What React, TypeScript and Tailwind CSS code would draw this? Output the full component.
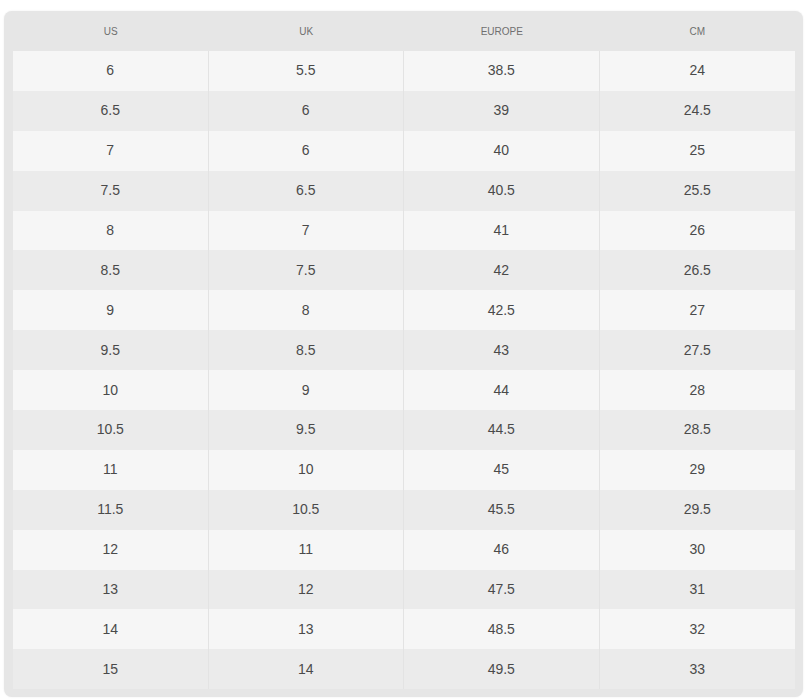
const headers = ["US", "UK", "Europe", "CM"]

const rows = [
  ["6", "5.5", "38.5", "24"],
  ["6.5", "6", "39", "24.5"],
  ["7", "6", "40", "25"],
  ["7.5", "6.5", "40.5", "25.5"],
  ["8", "7", "41", "26"],
  ["8.5", "7.5", "42", "26.5"],
  ["9", "8", "42.5", "27"],
  ["9.5", "8.5", "43", "27.5"],
  ["10", "9", "44", "28"],
  ["10.5", "9.5", "44.5", "28.5"],
  ["11", "10", "45", "29"],
  ["11.5", "10.5", "45.5", "29.5"],
  ["12", "11", "46", "30"],
  ["13", "12", "47.5", "31"],
  ["14", "13", "48.5", "32"],
  ["15", "14", "49.5", "33"],
]

export default function App() {
  return (
    <div className="h-[700px] w-[806px] bg-white pl-[4px] pt-[11px] font-['Liberation_Sans',Arial,sans-serif]">
      <div className="w-[799px] rounded-[8px] bg-[#e6e6e6] pb-[8px] pl-[9px] pr-[8px] shadow-[0_0_2px_rgba(0,0,0,0.08)]">
        <div className="grid h-[40px] grid-cols-4 items-center">
          {headers.map((h) => (
            <div key={h} className="text-center text-[10px] uppercase text-[#6f6f6f]">
              {h}
            </div>
          ))}
        </div>
        <div>
          {rows.map((row, i) => (
            <div
              key={i}
              className={
                i % 2 === 0
                  ? "grid h-[39.9px] grid-cols-4 bg-[#f6f6f6]"
                  : "grid h-[39.9px] grid-cols-4 bg-[#ebebeb]"
              }
            >
              {row.map((cell, j) => (
                <div
                  key={j}
                  className={
                    j < 3
                      ? "flex items-center justify-center border-r border-[#e3e3e3] text-[14px] text-[#4a4a4a]"
                      : "flex items-center justify-center text-[14px] text-[#4a4a4a]"
                  }
                >
                  {cell}
                </div>
              ))}
            </div>
          ))}
        </div>
      </div>
    </div>
  )
}
